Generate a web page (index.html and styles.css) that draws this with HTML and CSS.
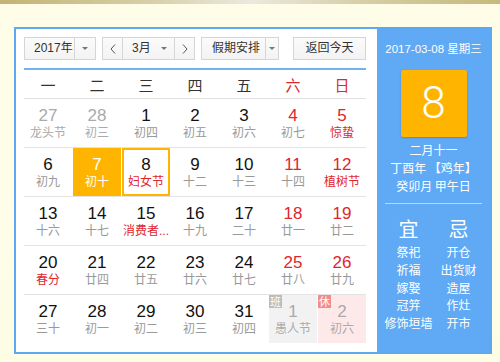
FILE: index.html
```html
<!DOCTYPE html>
<html lang="zh-CN">
<head>
<meta charset="utf-8">
<title>万年历</title>
<link rel="stylesheet" href="styles.css">
</head>
<body>
<div class="topbar"></div>
<div class="page">
  <div class="calendar">
    <div class="main">
      <div class="toolbar">
        <div class="sel year">
          <span class="sel-text">2017年</span>
          <span class="sel-drop"><i class="caret"></i></span>
        </div>
        <div class="sel month">
          <span class="nav prev"><svg width="6" height="10" viewBox="0 0 6 10"><polyline points="5,0.5 1,5 5,9.5"/></svg></span>
          <span class="month-text">3月<i class="caret"></i></span>
          <span class="nav next"><svg width="6" height="10" viewBox="0 0 6 10"><polyline points="1,0.5 5,5 1,9.5"/></svg></span>
        </div>
        <div class="sel holiday">
          <span class="sel-text">假期安排</span>
          <span class="sel-drop"><i class="caret"></i></span>
        </div>
        <div class="btn-today">返回今天</div>
      </div>

      <div class="weekdays">
        <span>一</span><span>二</span><span>三</span><span>四</span><span>五</span><span class="we">六</span><span class="we">日</span>
      </div>

      <div class="days">
        <div class="week">
          <div class="day other"><span class="num">27</span><span class="lunar">龙头节</span></div>
          <div class="day other"><span class="num">28</span><span class="lunar">初三</span></div>
          <div class="day"><span class="num">1</span><span class="lunar">初四</span></div>
          <div class="day"><span class="num">2</span><span class="lunar">初五</span></div>
          <div class="day"><span class="num">3</span><span class="lunar">初六</span></div>
          <div class="day red"><span class="num">4</span><span class="lunar">初七</span></div>
          <div class="day red"><span class="num">5</span><span class="lunar fest">惊蛰</span></div>
        </div>
        <div class="week">
          <div class="day"><span class="num">6</span><span class="lunar">初九</span></div>
          <div class="day selected"><span class="num">7</span><span class="lunar">初十</span></div>
          <div class="day today"><span class="num">8</span><span class="lunar fest">妇女节</span></div>
          <div class="day"><span class="num">9</span><span class="lunar">十二</span></div>
          <div class="day"><span class="num">10</span><span class="lunar">十三</span></div>
          <div class="day red"><span class="num">11</span><span class="lunar">十四</span></div>
          <div class="day red"><span class="num">12</span><span class="lunar fest">植树节</span></div>
        </div>
        <div class="week">
          <div class="day"><span class="num">13</span><span class="lunar">十六</span></div>
          <div class="day"><span class="num">14</span><span class="lunar">十七</span></div>
          <div class="day"><span class="num">15</span><span class="lunar fest">消费者...</span></div>
          <div class="day"><span class="num">16</span><span class="lunar">十九</span></div>
          <div class="day"><span class="num">17</span><span class="lunar">二十</span></div>
          <div class="day red"><span class="num">18</span><span class="lunar">廿一</span></div>
          <div class="day red"><span class="num">19</span><span class="lunar">廿二</span></div>
        </div>
        <div class="week">
          <div class="day"><span class="num">20</span><span class="lunar fest">春分</span></div>
          <div class="day"><span class="num">21</span><span class="lunar">廿四</span></div>
          <div class="day"><span class="num">22</span><span class="lunar">廿五</span></div>
          <div class="day"><span class="num">23</span><span class="lunar">廿六</span></div>
          <div class="day"><span class="num">24</span><span class="lunar">廿七</span></div>
          <div class="day red"><span class="num">25</span><span class="lunar">廿八</span></div>
          <div class="day red"><span class="num">26</span><span class="lunar">廿九</span></div>
        </div>
        <div class="week">
          <div class="day"><span class="num">27</span><span class="lunar">三十</span></div>
          <div class="day"><span class="num">28</span><span class="lunar">初一</span></div>
          <div class="day"><span class="num">29</span><span class="lunar">初二</span></div>
          <div class="day"><span class="num">30</span><span class="lunar">初三</span></div>
          <div class="day"><span class="num">31</span><span class="lunar">初四</span></div>
          <div class="day other work"><span class="badge">班</span><span class="num">1</span><span class="lunar">愚人节</span></div>
          <div class="day other rest"><span class="badge">休</span><span class="num">2</span><span class="lunar">初六</span></div>
        </div>
      </div>
    </div>

    <div class="side">
      <div class="side-date">2017-03-08 星期三</div>
      <div class="big-day">8</div>
      <div class="side-lunar">
        <div>二月十一</div>
        <div>丁酉年 【鸡年】</div>
        <div>癸卯月 甲午日</div>
      </div>
      <div class="side-divider"></div>
      <div class="yiji">
        <div class="yiji-col">
          <div class="yiji-head">宜</div>
          <div>祭祀</div>
          <div>祈福</div>
          <div>嫁娶</div>
          <div>冠笄</div>
          <div>修饰垣墙</div>
        </div>
        <div class="yiji-col">
          <div class="yiji-head">忌</div>
          <div>开仓</div>
          <div>出货财</div>
          <div>造屋</div>
          <div>作灶</div>
          <div>开市</div>
        </div>
      </div>
    </div>
  </div>
</div>
</body>
</html>
```

FILE: styles.css
```css
* {
  box-sizing: border-box;
  margin: 0;
  padding: 0;
}

body {
  width: 500px;
  height: 362px;
  overflow: hidden;
  background: #fefce8;
  font-family: "Liberation Sans", "Noto Sans CJK SC", sans-serif;
  color: #333;
}

.topbar {
  height: 4px;
  background: linear-gradient(to right, #c3b475 0%, #d6cfa8 30%, #ebe9de 50%, #d6cfa8 72%, #c6b97c 100%);
}

.page {
  height: 358px;
  padding: 23px 0 0 14px;
  background: linear-gradient(#fffde8, #fefde9 60%, #fdfce4);
}

.calendar {
  width: 478px;
  height: 327px;
  display: flex;
  border: 2px solid #5ea8f3;
  background: #fff;
}

.main {
  width: 361px;
  padding: 8px 11px 0 8px;
}

/* toolbar */
.toolbar {
  display: flex;
  height: 23px;
}

.sel,
.btn-today {
  display: flex;
  height: 23px;
  border: 1px solid #d5d5d5;
  background: linear-gradient(#fbfbfb, #f3f3f3);
  font-size: 12px;
  line-height: 21px;
  color: #333;
}

.sel-text {
  display: block;
}

.sel-drop {
  flex: 1;
  display: flex;
  align-items: center;
  justify-content: center;
}

.caret {
  display: block;
  width: 0;
  height: 0;
  border-left: 3px solid transparent;
  border-right: 3px solid transparent;
  border-top: 3px solid #777;
}

.year {
  width: 72px;
}

.year .sel-text {
  width: 50px;
  padding-left: 9px;
  border-right: 1px solid #d5d5d5;
}

.month {
  width: 93px;
  margin-left: 6px;
}

.nav {
  width: 20px;
  display: flex;
  align-items: center;
  justify-content: center;
}

.nav svg polyline {
  fill: none;
  stroke: #555;
  stroke-width: 1;
}

.prev {
  border-right: 1px solid #d5d5d5;
}

.next {
  border-left: 1px solid #d5d5d5;
}

.month-text {
  flex: 1;
  display: flex;
  align-items: center;
  justify-content: space-between;
  padding: 0 7px 0 9px;
}

.holiday {
  width: 78px;
  margin-left: 6px;
}

.holiday .sel-text {
  width: 64px;
  padding-left: 10px;
  border-right: 1px solid #d5d5d5;
}

.btn-today {
  width: 73px;
  margin-left: auto;
  justify-content: center;
}

/* weekday header */
.weekdays {
  margin-top: 8px;
  border-top: 2px solid #72b2ef;
  border-bottom: 1px solid #e0e0e0;
  height: 31px;
  display: grid;
  grid-template-columns: repeat(7, 48px);
  column-gap: 1px;
  align-items: center;
  font-size: 15px;
  color: #333;
  text-align: center;
  font-family: "Noto Sans CJK SC", sans-serif;
}

.weekdays .we {
  color: #e0282d;
}

/* day grid */
.week {
  display: grid;
  grid-template-columns: repeat(7, 48px);
  column-gap: 1px;
  height: 49px;
  border-bottom: 1px solid #e3e3e3;
}

.week:last-child {
  border-bottom: none;
}

.day {
  position: relative;
  height: 48px;
  padding-top: 7px;
  text-align: center;
}

.num {
  display: block;
  font-size: 17px;
  line-height: 20px;
  color: #111;
}

.lunar {
  display: block;
  font-size: 12px;
  line-height: 15px;
  color: #999;
  white-space: nowrap;
}

.red .num {
  color: #e0262d;
}

.lunar.fest {
  color: #e0262d;
}

.other .num,
.other .lunar {
  color: #aaa;
}

.selected {
  background: #ffb500;
}

.selected .num,
.selected .lunar {
  color: #fff;
}

.today {
  border: 2px solid #ffb500;
  padding-top: 5px;
}

.today .num {
  color: #111;
}

.work {
  background: #f2f2f2;
}

.rest {
  background: #fde9e9;
}

.badge {
  position: absolute;
  top: 0;
  left: 0;
  width: 13px;
  height: 13px;
  font-size: 11px;
  line-height: 13px;
  color: #fff;
  text-align: center;
  font-family: "Noto Sans CJK SC", sans-serif;
}

.work .badge {
  background: #bcbcbc;
}

.rest .badge {
  background: #f48a8a;
}

/* side panel */
.side {
  flex: 1;
  background: #5fa9f5;
  color: #fff;
  text-align: center;
  padding-top: 12px;
}

.side-date {
  font-size: 11.5px;
  line-height: 16px;
  white-space: nowrap;
}

.big-day {
  width: 66px;
  height: 67px;
  margin: 13px auto 0;
  background: #ffb500;
  border-radius: 2px;
  box-shadow: 0 1px 2px rgba(0, 0, 0, 0.18);
  font-family: Roboto, "Liberation Sans", sans-serif;
  font-weight: 300;
  font-size: 44px;
  line-height: 67px;
  color: #fff;
}

.side-lunar {
  margin-top: 4px;
  font-size: 12px;
  line-height: 18px;
  font-family: "Noto Sans CJK SC", sans-serif;
}

.side-divider {
  width: 97px;
  height: 1px;
  margin: 8px auto 0;
  background: rgba(255, 255, 255, 0.55);
}

.yiji {
  display: grid;
  grid-template-columns: 50px 50px;
  justify-content: center;
  margin-top: 10px;
  font-family: "Noto Sans CJK SC", sans-serif;
  font-size: 12px;
  line-height: 17.8px;
  white-space: nowrap;
}

.yiji-head {
  font-size: 20px;
  line-height: 29px;
}
```
